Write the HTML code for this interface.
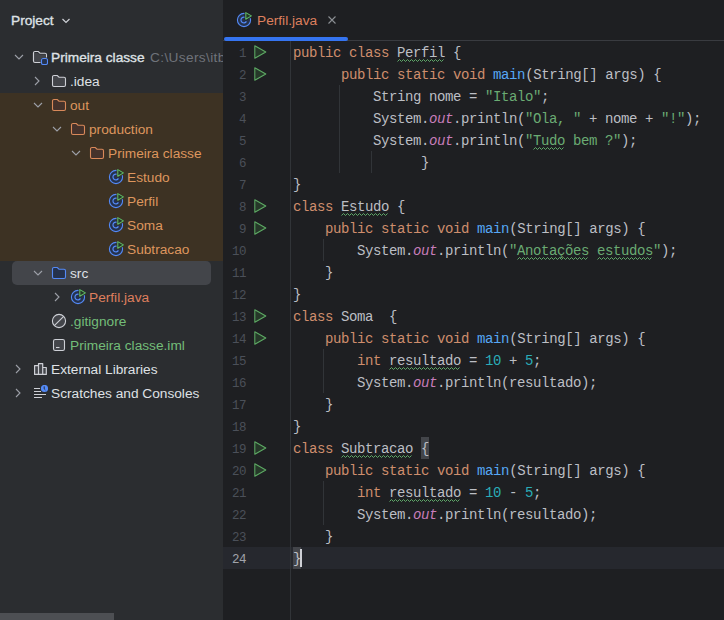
<!DOCTYPE html>
<html><head><meta charset="utf-8">
<style>
html,body{margin:0;padding:0;}
body{width:724px;height:620px;overflow:hidden;background:#1E1F22;position:relative;font-family:"Liberation Sans",sans-serif;}
.a{position:absolute;}
#proj{left:0;top:0;width:223px;height:620px;background:#2B2D30;overflow:hidden;}
.t{position:absolute;white-space:pre;font-size:13.7px;line-height:16px;color:#DFE1E5;}
.ic{position:absolute;width:16px;height:16px;}
.code{position:absolute;left:293px;margin-top:1px;white-space:pre;font-family:"Liberation Mono",monospace;font-size:14px;letter-spacing:-0.4px;line-height:22px;height:22px;color:#BCBEC4;}
.ln{position:absolute;left:200px;margin-top:2px;width:46px;white-space:pre;font-family:"Liberation Mono",monospace;font-size:12.5px;letter-spacing:-0.5px;line-height:22px;color:#4B5059;text-align:right;}
.k{color:#CF8E6D}.s{color:#6AAB73}.n{color:#2AACB8}.f{color:#56A8F5}.o{color:#C77DBB;font-style:italic}
.ty{text-decoration:underline wavy #5E9E66;text-decoration-thickness:1px;text-underline-offset:3px;text-decoration-skip-ink:none;}
.guide{position:absolute;width:1px;background:#313438;}
</style></head><body>
<div id="proj" class="a"><div class="t" style="left:11px;top:13px;-webkit-text-stroke:0.35px #DFE1E5;">Project</div>
<svg class="a" style="left:61px;top:17px" width="10" height="8" viewBox="0 0 10 8"><polyline points="1.5,2 5,5.5 8.5,2" fill="none" stroke="#CED0D6" stroke-width="1.2"/></svg>
<div class="a" style="left:0;top:93px;width:223px;height:168px;background:#3D3223;"></div>
<div class="a" style="left:12px;top:261px;width:199px;height:24px;background:#43454A;border-radius:5px;"></div>
<svg class="a" style="left:14px;top:53px" width="10" height="8" viewBox="0 0 10 8"><polyline points="1,2 5,6 9,2" fill="none" stroke="#9DA0A8" stroke-width="1.1"/></svg>
<svg class="ic" style="left:32px;top:49px" viewBox="0 0 16 16"><path d="M1.5 12V4A1.5 1.5 0 0 1 3 2.5h3.3l1.7 1.7h5A1.5 1.5 0 0 1 14.5 5.7V8.5" fill="none" stroke="#CED0D6" stroke-width="1.1"/><path d="M2 4h4l1.5 1.5h6.5V9H9v4H2z" fill="#43454A"/><path d="M1.5 4V12A1.5 1.5 0 0 0 3 13.5H8.5" fill="none" stroke="#CED0D6" stroke-width="1.1"/><rect x="9.5" y="9.5" width="6" height="6" rx="1.6" fill="#25324D" stroke="#548AF7" stroke-width="1.1"/></svg>
<div class="t" style="left:51px;top:50px;color:#DFE1E5;-webkit-text-stroke:0.35px #DFE1E5;">Primeira classe</div>
<div class="t" style="left:150px;top:50px;color:#6F737A;letter-spacing:0.35px;">C:\Users\itbr\IdeaProjects</div>
<svg class="a" style="left:33px;top:76px" width="8" height="10" viewBox="0 0 8 10"><polyline points="2,1 6,5 2,9" fill="none" stroke="#9DA0A8" stroke-width="1.1"/></svg>
<svg class="ic" style="left:51px;top:73px" viewBox="0 0 16 16"><path d="M1.5 12V4A1.5 1.5 0 0 1 3 2.5h3.3l1.7 1.7h5A1.5 1.5 0 0 1 14.5 5.7V12A1.5 1.5 0 0 1 13 13.5H3A1.5 1.5 0 0 1 1.5 12z" fill="#43454A" stroke="#CED0D6" stroke-width="1.1"/></svg>
<div class="t" style="left:70px;top:74px;color:#DFE1E5;">.idea</div>
<svg class="a" style="left:33px;top:101px" width="10" height="8" viewBox="0 0 10 8"><polyline points="1,2 5,6 9,2" fill="none" stroke="#9DA0A8" stroke-width="1.1"/></svg>
<svg class="ic" style="left:51px;top:97px" viewBox="0 0 16 16"><path d="M1.5 12V4A1.5 1.5 0 0 1 3 2.5h3.3l1.7 1.7h5A1.5 1.5 0 0 1 14.5 5.7V12A1.5 1.5 0 0 1 13 13.5H3A1.5 1.5 0 0 1 1.5 12z" fill="#45322B" stroke="#D9895A" stroke-width="1.1"/></svg>
<div class="t" style="left:70px;top:98px;color:#DD965E;">out</div>
<svg class="a" style="left:52px;top:125px" width="10" height="8" viewBox="0 0 10 8"><polyline points="1,2 5,6 9,2" fill="none" stroke="#9DA0A8" stroke-width="1.1"/></svg>
<svg class="ic" style="left:70px;top:121px" viewBox="0 0 16 16"><path d="M1.5 12V4A1.5 1.5 0 0 1 3 2.5h3.3l1.7 1.7h5A1.5 1.5 0 0 1 14.5 5.7V12A1.5 1.5 0 0 1 13 13.5H3A1.5 1.5 0 0 1 1.5 12z" fill="#45322B" stroke="#D9895A" stroke-width="1.1"/></svg>
<div class="t" style="left:89px;top:122px;color:#DD965E;">production</div>
<svg class="a" style="left:71px;top:149px" width="10" height="8" viewBox="0 0 10 8"><polyline points="1,2 5,6 9,2" fill="none" stroke="#9DA0A8" stroke-width="1.1"/></svg>
<svg class="ic" style="left:89px;top:145px" viewBox="0 0 16 16"><path d="M1.5 12V4A1.5 1.5 0 0 1 3 2.5h3.3l1.7 1.7h5A1.5 1.5 0 0 1 14.5 5.7V12A1.5 1.5 0 0 1 13 13.5H3A1.5 1.5 0 0 1 1.5 12z" fill="#45322B" stroke="#D9895A" stroke-width="1.1"/></svg>
<div class="t" style="left:108px;top:146px;color:#DD965E;">Primeira classe</div>
<svg class="ic" style="left:108px;top:169px" viewBox="0 0 16 16"><circle cx="8" cy="8" r="6.6" fill="#25324D" stroke="#548AF7" stroke-width="1.1"/><path d="M10.4 6.6A2.9 2.9 0 1 0 10.4 9.4" fill="none" stroke="#548AF7" stroke-width="1.2"/><path d="M9.8 0.6L15.4 3.9L9.8 7.2Z" fill="none" stroke="#3D3223" stroke-width="2.6" stroke-linejoin="round"/><path d="M9.8 0.6L15.4 3.9L9.8 7.2Z" fill="#253627" stroke="#5FB865" stroke-width="1.1" stroke-linejoin="round"/></svg>
<div class="t" style="left:127px;top:170px;color:#DD965E;">Estudo</div>
<svg class="ic" style="left:108px;top:193px" viewBox="0 0 16 16"><circle cx="8" cy="8" r="6.6" fill="#25324D" stroke="#548AF7" stroke-width="1.1"/><path d="M10.4 6.6A2.9 2.9 0 1 0 10.4 9.4" fill="none" stroke="#548AF7" stroke-width="1.2"/><path d="M9.8 0.6L15.4 3.9L9.8 7.2Z" fill="none" stroke="#3D3223" stroke-width="2.6" stroke-linejoin="round"/><path d="M9.8 0.6L15.4 3.9L9.8 7.2Z" fill="#253627" stroke="#5FB865" stroke-width="1.1" stroke-linejoin="round"/></svg>
<div class="t" style="left:127px;top:194px;color:#DD965E;">Perfil</div>
<svg class="ic" style="left:108px;top:217px" viewBox="0 0 16 16"><circle cx="8" cy="8" r="6.6" fill="#25324D" stroke="#548AF7" stroke-width="1.1"/><path d="M10.4 6.6A2.9 2.9 0 1 0 10.4 9.4" fill="none" stroke="#548AF7" stroke-width="1.2"/><path d="M9.8 0.6L15.4 3.9L9.8 7.2Z" fill="none" stroke="#3D3223" stroke-width="2.6" stroke-linejoin="round"/><path d="M9.8 0.6L15.4 3.9L9.8 7.2Z" fill="#253627" stroke="#5FB865" stroke-width="1.1" stroke-linejoin="round"/></svg>
<div class="t" style="left:127px;top:218px;color:#DD965E;">Soma</div>
<svg class="ic" style="left:108px;top:241px" viewBox="0 0 16 16"><circle cx="8" cy="8" r="6.6" fill="#25324D" stroke="#548AF7" stroke-width="1.1"/><path d="M10.4 6.6A2.9 2.9 0 1 0 10.4 9.4" fill="none" stroke="#548AF7" stroke-width="1.2"/><path d="M9.8 0.6L15.4 3.9L9.8 7.2Z" fill="none" stroke="#3D3223" stroke-width="2.6" stroke-linejoin="round"/><path d="M9.8 0.6L15.4 3.9L9.8 7.2Z" fill="#253627" stroke="#5FB865" stroke-width="1.1" stroke-linejoin="round"/></svg>
<div class="t" style="left:127px;top:242px;color:#DD965E;">Subtracao</div>
<svg class="a" style="left:33px;top:269px" width="10" height="8" viewBox="0 0 10 8"><polyline points="1,2 5,6 9,2" fill="none" stroke="#9DA0A8" stroke-width="1.1"/></svg>
<svg class="ic" style="left:51px;top:265px" viewBox="0 0 16 16"><path d="M1.5 12V4A1.5 1.5 0 0 1 3 2.5h3.3l1.7 1.7h5A1.5 1.5 0 0 1 14.5 5.7V12A1.5 1.5 0 0 1 13 13.5H3A1.5 1.5 0 0 1 1.5 12z" fill="#25324D" stroke="#548AF7" stroke-width="1.1"/></svg>
<div class="t" style="left:70px;top:266px;color:#DFE1E5;">src</div>
<svg class="a" style="left:53px;top:292px" width="8" height="10" viewBox="0 0 8 10"><polyline points="2,1 6,5 2,9" fill="none" stroke="#9DA0A8" stroke-width="1.1"/></svg>
<svg class="ic" style="left:70px;top:289px" viewBox="0 0 16 16"><circle cx="8" cy="8" r="6.6" fill="#25324D" stroke="#548AF7" stroke-width="1.1"/><path d="M10.4 6.6A2.9 2.9 0 1 0 10.4 9.4" fill="none" stroke="#548AF7" stroke-width="1.2"/><path d="M9.8 0.6L15.4 3.9L9.8 7.2Z" fill="none" stroke="#2B2D30" stroke-width="2.6" stroke-linejoin="round"/><path d="M9.8 0.6L15.4 3.9L9.8 7.2Z" fill="#253627" stroke="#5FB865" stroke-width="1.1" stroke-linejoin="round"/></svg>
<div class="t" style="left:89px;top:290px;color:#DF7F5E;">Perfil.java</div>
<svg class="ic" style="left:51px;top:313px" viewBox="0 0 16 16"><circle cx="8" cy="8" r="6.6" fill="#43454A" stroke="#CED0D6" stroke-width="1.1"/><line x1="12.7" y1="3.3" x2="3.3" y2="12.7" stroke="#CED0D6" stroke-width="1.1"/></svg>
<div class="t" style="left:70px;top:314px;color:#73BD79;">.gitignore</div>
<svg class="ic" style="left:51px;top:337px" viewBox="0 0 16 16"><rect x="2.5" y="2.5" width="11" height="11" rx="1.8" fill="#43454A" stroke="#CED0D6" stroke-width="1.1"/><line x1="5" y1="10.5" x2="8.5" y2="10.5" stroke="#CED0D6" stroke-width="1.1"/></svg>
<div class="t" style="left:70px;top:338px;color:#73BD79;">Primeira classe.iml</div>
<svg class="a" style="left:14px;top:364px" width="8" height="10" viewBox="0 0 8 10"><polyline points="2,1 6,5 2,9" fill="none" stroke="#9DA0A8" stroke-width="1.1"/></svg>
<svg class="ic" style="left:32px;top:361px" viewBox="0 0 16 16"><path d="M2.6 13.4V4.6H6.5V13.4ZM6.5 13.4V2.6H10.7V13.4ZM10.7 13.4V6.5H14.3V13.4Z" fill="#43454A" stroke="#CED0D6" stroke-width="1.2" stroke-linejoin="round"/></svg>
<div class="t" style="left:51px;top:362px;color:#DFE1E5;">External Libraries</div>
<svg class="a" style="left:14px;top:388px" width="8" height="10" viewBox="0 0 8 10"><polyline points="2,1 6,5 2,9" fill="none" stroke="#9DA0A8" stroke-width="1.1"/></svg>
<svg class="ic" style="left:32px;top:385px" viewBox="0 0 16 16"><path d="M2 3.5h6M2 6.5h7M2 9.5h12M2 12.5h8" stroke="#CED0D6" stroke-width="1.2"/><circle cx="12.5" cy="3.5" r="3.6" fill="#548AF7"/><path d="M12.2 1.4v2.4l1.1 1.1" fill="none" stroke="#1E1F22" stroke-width="0.9"/></svg>
<div class="t" style="left:51px;top:386px;color:#DFE1E5;">Scratches and Consoles</div>
<div class="a" style="left:0;top:613px;width:114px;height:7px;background:#4D4F53;"></div></div>
<div class="a" style="left:223px;top:40px;width:501px;height:1px;background:#393B40;"></div>
<svg class="ic" style="left:236px;top:12px" viewBox="0 0 16 16"><circle cx="8" cy="8" r="6.6" fill="#25324D" stroke="#548AF7" stroke-width="1.1"/><path d="M10.4 6.6A2.9 2.9 0 1 0 10.4 9.4" fill="none" stroke="#548AF7" stroke-width="1.2"/><path d="M9.8 0.6L15.4 3.9L9.8 7.2Z" fill="none" stroke="#1E1F22" stroke-width="2.6" stroke-linejoin="round"/><path d="M9.8 0.6L15.4 3.9L9.8 7.2Z" fill="#253627" stroke="#5FB865" stroke-width="1.1" stroke-linejoin="round"/></svg>
<div class="t" style="left:257px;top:13px;color:#DF7F5E;">Perfil.java</div>
<svg class="a" style="left:327px;top:15px" width="10" height="10" viewBox="0 0 10 10"><path d="M1.5 1.5L8.5 8.5M8.5 1.5L1.5 8.5" stroke="#8C8F94" stroke-width="1.1"/></svg>
<div class="a" style="left:224px;top:37px;width:124px;height:4px;background:#3574F0;border-radius:2px;"></div>
<div class="a" style="left:223px;top:547px;width:501px;height:22px;background:#26282E;"></div>
<div class="a" style="left:421px;top:437px;width:8px;height:22px;background:#43454A;"></div>
<div class="a" style="left:293px;top:547px;width:8px;height:22px;background:#43454A;"></div>
<div class="ln" style="top:41px;color:#4B5059">1</div>
<div class="code" style="top:41px"><span class="k">public</span> <span class="k">class</span> Perfil {</div>
<svg class="a" style="left:252px;top:44px" width="16" height="16" viewBox="0 0 16 16"><path d="M2.8 1.8L13.8 8L2.8 14.2Z" fill="#263829" stroke="#5DAA64" stroke-width="1.05" stroke-linejoin="round"/></svg>
<div class="ln" style="top:63px;color:#4B5059">2</div>
<div class="code" style="top:63px">      <span class="k">public</span> <span class="k">static</span> <span class="k">void</span> <span class="f">main</span>(String[] args) {</div>
<svg class="a" style="left:252px;top:66px" width="16" height="16" viewBox="0 0 16 16"><path d="M2.8 1.8L13.8 8L2.8 14.2Z" fill="#263829" stroke="#5DAA64" stroke-width="1.05" stroke-linejoin="round"/></svg>
<div class="ln" style="top:85px;color:#4B5059">3</div>
<div class="code" style="top:85px">          String nome = <span class="s">"Italo"</span>;</div>
<div class="ln" style="top:107px;color:#4B5059">4</div>
<div class="code" style="top:107px">          System.<span class="o">out</span>.println(<span class="s">"Ola, "</span> + nome + <span class="s">"!"</span>);</div>
<div class="ln" style="top:129px;color:#4B5059">5</div>
<div class="code" style="top:129px">          System.<span class="o">out</span>.println(<span class="s">"Tudo bem ?"</span>);</div>
<div class="ln" style="top:151px;color:#4B5059">6</div>
<div class="code" style="top:151px">                }</div>
<div class="ln" style="top:173px;color:#4B5059">7</div>
<div class="code" style="top:173px">}</div>
<div class="ln" style="top:195px;color:#4B5059">8</div>
<div class="code" style="top:195px"><span class="k">class</span> Estudo {</div>
<svg class="a" style="left:252px;top:198px" width="16" height="16" viewBox="0 0 16 16"><path d="M2.8 1.8L13.8 8L2.8 14.2Z" fill="#263829" stroke="#5DAA64" stroke-width="1.05" stroke-linejoin="round"/></svg>
<div class="ln" style="top:217px;color:#4B5059">9</div>
<div class="code" style="top:217px">    <span class="k">public</span> <span class="k">static</span> <span class="k">void</span> <span class="f">main</span>(String[] args) {</div>
<svg class="a" style="left:252px;top:220px" width="16" height="16" viewBox="0 0 16 16"><path d="M2.8 1.8L13.8 8L2.8 14.2Z" fill="#263829" stroke="#5DAA64" stroke-width="1.05" stroke-linejoin="round"/></svg>
<div class="ln" style="top:239px;color:#4B5059">10</div>
<div class="code" style="top:239px">        System.<span class="o">out</span>.println(<span class="s">"Anotações estudos"</span>);</div>
<div class="ln" style="top:261px;color:#4B5059">11</div>
<div class="code" style="top:261px">    }</div>
<div class="ln" style="top:283px;color:#4B5059">12</div>
<div class="code" style="top:283px">}</div>
<div class="ln" style="top:305px;color:#4B5059">13</div>
<div class="code" style="top:305px"><span class="k">class</span> Soma  {</div>
<svg class="a" style="left:252px;top:308px" width="16" height="16" viewBox="0 0 16 16"><path d="M2.8 1.8L13.8 8L2.8 14.2Z" fill="#263829" stroke="#5DAA64" stroke-width="1.05" stroke-linejoin="round"/></svg>
<div class="ln" style="top:327px;color:#4B5059">14</div>
<div class="code" style="top:327px">    <span class="k">public</span> <span class="k">static</span> <span class="k">void</span> <span class="f">main</span>(String[] args) {</div>
<svg class="a" style="left:252px;top:330px" width="16" height="16" viewBox="0 0 16 16"><path d="M2.8 1.8L13.8 8L2.8 14.2Z" fill="#263829" stroke="#5DAA64" stroke-width="1.05" stroke-linejoin="round"/></svg>
<div class="ln" style="top:349px;color:#4B5059">15</div>
<div class="code" style="top:349px">        <span class="k">int</span> resultado = <span class="n">10</span> + <span class="n">5</span>;</div>
<div class="ln" style="top:371px;color:#4B5059">16</div>
<div class="code" style="top:371px">        System.<span class="o">out</span>.println(resultado);</div>
<div class="ln" style="top:393px;color:#4B5059">17</div>
<div class="code" style="top:393px">    }</div>
<div class="ln" style="top:415px;color:#4B5059">18</div>
<div class="code" style="top:415px">}</div>
<div class="ln" style="top:437px;color:#4B5059">19</div>
<div class="code" style="top:437px"><span class="k">class</span> Subtracao {</div>
<svg class="a" style="left:252px;top:440px" width="16" height="16" viewBox="0 0 16 16"><path d="M2.8 1.8L13.8 8L2.8 14.2Z" fill="#263829" stroke="#5DAA64" stroke-width="1.05" stroke-linejoin="round"/></svg>
<div class="ln" style="top:459px;color:#4B5059">20</div>
<div class="code" style="top:459px">    <span class="k">public</span> <span class="k">static</span> <span class="k">void</span> <span class="f">main</span>(String[] args) {</div>
<svg class="a" style="left:252px;top:462px" width="16" height="16" viewBox="0 0 16 16"><path d="M2.8 1.8L13.8 8L2.8 14.2Z" fill="#263829" stroke="#5DAA64" stroke-width="1.05" stroke-linejoin="round"/></svg>
<div class="ln" style="top:481px;color:#4B5059">21</div>
<div class="code" style="top:481px">        <span class="k">int</span> resultado = <span class="n">10</span> - <span class="n">5</span>;</div>
<div class="ln" style="top:503px;color:#4B5059">22</div>
<div class="code" style="top:503px">        System.<span class="o">out</span>.println(resultado);</div>
<div class="ln" style="top:525px;color:#4B5059">23</div>
<div class="code" style="top:525px">    }</div>
<div class="ln" style="top:547px;color:#A1A3AB">24</div>
<div class="code" style="top:547px">}</div>
<svg class="a" style="left:397px;top:41px" width="49" height="22"><polyline points="0.5,20.5 2.5,18.5 4.5,20.5 6.5,18.5 8.5,20.5 10.5,18.5 12.5,20.5 14.5,18.5 16.5,20.5 18.5,18.5 20.5,20.5 22.5,18.5 24.5,20.5 26.5,18.5 28.5,20.5 30.5,18.5 32.5,20.5 34.5,18.5 36.5,20.5 38.5,18.5 40.5,20.5 42.5,18.5 44.5,20.5 46.5,18.5" fill="none" stroke="#5FAA69" stroke-width="1"/></svg>
<svg class="a" style="left:533px;top:129px" width="33" height="22"><polyline points="0.5,20.5 2.5,18.5 4.5,20.5 6.5,18.5 8.5,20.5 10.5,18.5 12.5,20.5 14.5,18.5 16.5,20.5 18.5,18.5 20.5,20.5 22.5,18.5 24.5,20.5 26.5,18.5 28.5,20.5 30.5,18.5" fill="none" stroke="#5FAA69" stroke-width="1"/></svg>
<svg class="a" style="left:341px;top:195px" width="49" height="22"><polyline points="0.5,20.5 2.5,18.5 4.5,20.5 6.5,18.5 8.5,20.5 10.5,18.5 12.5,20.5 14.5,18.5 16.5,20.5 18.5,18.5 20.5,20.5 22.5,18.5 24.5,20.5 26.5,18.5 28.5,20.5 30.5,18.5 32.5,20.5 34.5,18.5 36.5,20.5 38.5,18.5 40.5,20.5 42.5,18.5 44.5,20.5 46.5,18.5" fill="none" stroke="#5FAA69" stroke-width="1"/></svg>
<svg class="a" style="left:517px;top:239px" width="73" height="22"><polyline points="0.5,20.5 2.5,18.5 4.5,20.5 6.5,18.5 8.5,20.5 10.5,18.5 12.5,20.5 14.5,18.5 16.5,20.5 18.5,18.5 20.5,20.5 22.5,18.5 24.5,20.5 26.5,18.5 28.5,20.5 30.5,18.5 32.5,20.5 34.5,18.5 36.5,20.5 38.5,18.5 40.5,20.5 42.5,18.5 44.5,20.5 46.5,18.5 48.5,20.5 50.5,18.5 52.5,20.5 54.5,18.5 56.5,20.5 58.5,18.5 60.5,20.5 62.5,18.5 64.5,20.5 66.5,18.5 68.5,20.5 70.5,18.5" fill="none" stroke="#5FAA69" stroke-width="1"/></svg>
<svg class="a" style="left:597px;top:239px" width="57" height="22"><polyline points="0.5,20.5 2.5,18.5 4.5,20.5 6.5,18.5 8.5,20.5 10.5,18.5 12.5,20.5 14.5,18.5 16.5,20.5 18.5,18.5 20.5,20.5 22.5,18.5 24.5,20.5 26.5,18.5 28.5,20.5 30.5,18.5 32.5,20.5 34.5,18.5 36.5,20.5 38.5,18.5 40.5,20.5 42.5,18.5 44.5,20.5 46.5,18.5 48.5,20.5 50.5,18.5 52.5,20.5 54.5,18.5" fill="none" stroke="#5FAA69" stroke-width="1"/></svg>
<svg class="a" style="left:389px;top:349px" width="73" height="22"><polyline points="0.5,20.5 2.5,18.5 4.5,20.5 6.5,18.5 8.5,20.5 10.5,18.5 12.5,20.5 14.5,18.5 16.5,20.5 18.5,18.5 20.5,20.5 22.5,18.5 24.5,20.5 26.5,18.5 28.5,20.5 30.5,18.5 32.5,20.5 34.5,18.5 36.5,20.5 38.5,18.5 40.5,20.5 42.5,18.5 44.5,20.5 46.5,18.5 48.5,20.5 50.5,18.5 52.5,20.5 54.5,18.5 56.5,20.5 58.5,18.5 60.5,20.5 62.5,18.5 64.5,20.5 66.5,18.5 68.5,20.5 70.5,18.5" fill="none" stroke="#5FAA69" stroke-width="1"/></svg>
<svg class="a" style="left:341px;top:437px" width="73" height="22"><polyline points="0.5,20.5 2.5,18.5 4.5,20.5 6.5,18.5 8.5,20.5 10.5,18.5 12.5,20.5 14.5,18.5 16.5,20.5 18.5,18.5 20.5,20.5 22.5,18.5 24.5,20.5 26.5,18.5 28.5,20.5 30.5,18.5 32.5,20.5 34.5,18.5 36.5,20.5 38.5,18.5 40.5,20.5 42.5,18.5 44.5,20.5 46.5,18.5 48.5,20.5 50.5,18.5 52.5,20.5 54.5,18.5 56.5,20.5 58.5,18.5 60.5,20.5 62.5,18.5 64.5,20.5 66.5,18.5 68.5,20.5 70.5,18.5" fill="none" stroke="#5FAA69" stroke-width="1"/></svg>
<svg class="a" style="left:389px;top:481px" width="73" height="22"><polyline points="0.5,20.5 2.5,18.5 4.5,20.5 6.5,18.5 8.5,20.5 10.5,18.5 12.5,20.5 14.5,18.5 16.5,20.5 18.5,18.5 20.5,20.5 22.5,18.5 24.5,20.5 26.5,18.5 28.5,20.5 30.5,18.5 32.5,20.5 34.5,18.5 36.5,20.5 38.5,18.5 40.5,20.5 42.5,18.5 44.5,20.5 46.5,18.5 48.5,20.5 50.5,18.5 52.5,20.5 54.5,18.5 56.5,20.5 58.5,18.5 60.5,20.5 62.5,18.5 64.5,20.5 66.5,18.5 68.5,20.5 70.5,18.5" fill="none" stroke="#5FAA69" stroke-width="1"/></svg>
<div class="a" style="left:290px;top:41px;width:1px;height:579px;background:#313438;"></div>
<div class="a" style="left:300px;top:549px;width:2px;height:18px;background:#CED0D6;"></div>
<div class="guide" style="left:339px;top:85px;height:88px;"></div>
<div class="guide" style="left:371px;top:151px;height:22px;"></div>
<div class="guide" style="left:323px;top:239px;height:22px;"></div>
<div class="guide" style="left:323px;top:349px;height:44px;"></div>
<div class="guide" style="left:323px;top:481px;height:44px;"></div>
</body></html>
